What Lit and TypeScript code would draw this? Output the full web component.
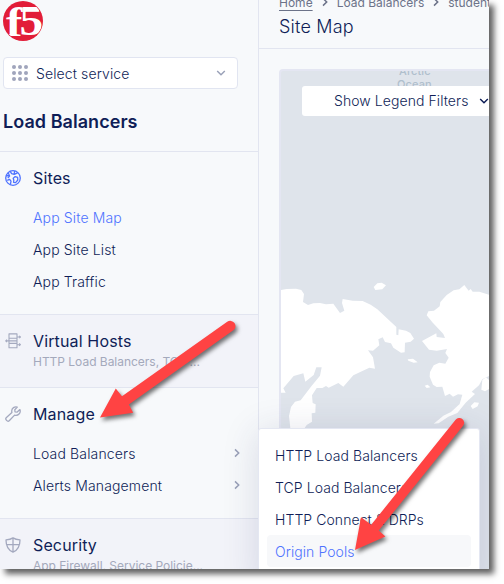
import { LitElement, html, svg, css } from "lit";
import { customElement, property } from "lit/decorators.js";

const icons: Record<string, unknown> = {
  globe: svg`<circle cx="8" cy="8" r="7.3"/><path d="M3.2 2.8 4.6 6 2.8 8.2M4.6 6 1.2 5.5M5.2 1.3 6.6 3.6 9.2 4.4 9.6 1M9.2 4.4 12.6 2.8M2.2 10.4 4.6 9.4 6 11.2 5.4 14.6M8.2 8.2 10.2 6.6 12.6 7.4 12.8 10 10.6 12.6 8.6 12.4 8.8 10.2Z"/>`,
  hosts: svg`<g stroke-width="1.1"><path d="M4 .9h8v4.4H4zM4 10.4h8v4.4H4zM4 5.3v5.1M12 5.3v5.1M.8 7.9H12M12 4h3M12 11.7h3"/><path d="M14.2 2.8 15.4 4 14.2 5.2M14.2 10.5 15.4 11.7 14.2 12.9M2 6.7.8 7.9 2 9.1"/></g>`,
  wrench: svg`<path d="M14.9 3.6 12.2 6.1 10 5.8 9.8 3.7 12.3 1.1C9.7.3 6.6 2 6.7 5.2L6.9 6.4 1.2 11.7C-.2 13.2 2.5 16.2 4.2 14.8L9.6 9.1C13.1 10.1 16.2 7 14.9 3.6Z"/>`,
  shield: svg`<path d="M8 .9C6 2.3 3.5 2.8 1 2.9 1 8.5 2.6 12.8 8 15.1 13.4 12.8 15 8.5 15 2.9 12.5 2.8 10 2.3 8 .9ZM8 1v14M1.3 7.7h13.4"/>`,
};

const right = html`<svg class="chev" width="6" height="10" viewBox="0 0 6 10"><path d="M1 1.4 4.7 5 1 8.6"/></svg>`;
const down = html`<svg class="chev" width="10" height="6" viewBox="0 0 10 6"><path d="M1.2 1 5 4.7 8.8 1"/></svg>`;

const base = css`
  * { box-sizing: border-box; }
  .chev { fill: none; stroke: currentColor; stroke-width: 1.5; display: block; flex: none; }
`;

@customElement("nav-section")
class NavSection extends LitElement {
  @property() icon = "";
  @property() heading = "";
  @property() note = "";
  @property({ type: Array }) items: string[] = [];
  @property() active = "";
  @property({ type: Boolean }) more = false;

  static styles = [base, css`
    :host { display: block; flex: none; box-sizing: border-box; border-top: 1px solid #e2e5f0; color: #0f1e57; }
    :host([note]) { background: #f2f3f9; }
    .head { display: flex; align-items: center; gap: 12px; padding: 15px 0 0 5px; height: 37px; }
    .icon { fill: none; stroke: #a4a9bf; stroke-width: 1.3; stroke-linejoin: round; display: block; }
    .icon.on { stroke: #4f73ff; }
    .title { font-size: 16px; line-height: 22px; letter-spacing: .14px; }
    .note { padding: 1px 0 0 33px; font-size: 12px; line-height: 18px; letter-spacing: -.02px; color: #a4a9bc; white-space: nowrap; }
    .list { padding-top: 12px; }
    .item { height: 32px; display: flex; align-items: center; justify-content: space-between; padding: 0 18px 0 33px; font-size: 14px; font-weight: 300; letter-spacing: .14px; }
    .item.on { color: #4f73ff; }
    .chev { color: #9aa1b8; }
  `];

  render() {
    return html`
      <div class="head">
        <svg class="icon ${this.icon === "globe" ? "on" : ""}" width="16" height="16" viewBox="0 0 16 16">${icons[this.icon]}</svg>
        <span class="title">${this.heading}</span>
      </div>
      ${this.note ? html`<div class="note">${this.note}</div>` : ""}
      ${this.items.length
        ? html`<div class="list">${this.items.map((t) => html`<div class="item ${t === this.active ? "on" : ""}"><span>${t}</span>${this.more ? right : ""}</div>`)}</div>`
        : ""}`;
  }
}

@customElement("site-map")
class SiteMap extends LitElement {
  static styles = [base, css`
    :host { display: block; position: relative; height: 520px; border: 2px solid #e4e6f2; border-right: 0; border-radius: 4px 0 0 0; background: #dfe4eb; overflow: hidden; }
    .land { position: absolute; left: 0; top: 0; fill: #fff; }
    .sea { font: 500 11px/12px Inter, sans-serif; fill: #b0bfcd; letter-spacing: .1px; }
    .legend { position: absolute; left: 21px; top: 15px; width: 230px; height: 30px; border-radius: 3px; background: #fff; display: flex; align-items: center; gap: 11px; padding: 0 0 1px 32px; font-size: 14px; font-weight: 300; letter-spacing: .07px; color: #0f1e57; white-space: nowrap; }
  `];

  render() {
    return html`
      <svg class="land" width="208" height="498" viewBox="281 71 208 498">
        <text class="sea" x="399" y="75.4">Arctic</text>
        <text class="sea" x="397" y="88">Ocean</text>
        <g transform="translate(270 270) scale(.33333)">
          <path d="M33 60 50 57 78 56 94 60 102 72 99 96 114 105 130 100 150 99 168 103 190 101 210 129 223 122 216 99 218 87 248 92 278 93 302 104 322 118 379 171 379 194 385 196 386 178 408 182 421 189 432 206 422 215 405 218 404 247 393 248 370 233 363 220 345 216 338 202 325 208 328 226 309 242 294 241 309 262 315 296 298 293 250 316 220 350 205 339 176 353 168 348 157 354 140 354 126 376 128 399 137 403 136 428 125 430 126 455 110 465 104 474 61 474 57 438 63 411 75 395 92 391 124 349 150 317 155 292 139 292 131 315 106 335 100 310 71 318 40 355 47 368 33 368Z"/>
          <path d="M311 51 322 40 335 38 348 46 337 58 316 60ZM413 268 429 266 443 277 431 278 415 272ZM464 347 473 344 481 352 470 354ZM602 408 613 397 627 398 623 409 608 417Z"/>
          <path d="M657 74 628 65 608 65 602 57 596 62 583 45 568 58 551 61 530 75 511 96 509 109 492 122 475 124 470 136 487 157 520 192 525 204 500 201 499 190 456 213 477 239 500 242 531 237 526 249 536 263 526 281 508 278 491 286 480 306 479 320 489 344 500 351 517 350 525 378 539 371 549 380 564 373 577 374 569 402 543 426 520 437 491 461 506 460 535 440 562 429 587 398 615 372 605 365 627 346 637 328 657 318Z"/>
          <path d="M648 322 637 330 634 359 645 364 657 357V330Z"/>
        </g>
      </svg>
      <div class="legend"><span>Show Legend Filters</span>${down}</div>`;
  }
}

@customElement("app-root")
class AppRoot extends LitElement {
  static styles = [base, css`
    :host { display: block; width: 504px; height: 584px; background: #fff; overflow: hidden; position: relative; font-family: Inter, sans-serif; }
    .shade { width: 489px; height: 569px; box-shadow: 5px 5px 6px rgba(0, 0, 0, .62); }
    .frame { width: 489px; height: 569px; background: #f7f9fb; display: flex; overflow: hidden; position: relative; }
    .side { width: 259px; flex: none; border-right: 1px solid #e2e5f0; display: flex; flex-direction: column; }
    .logo { display: block; margin: 1px 0 0 3px; flex: none; }
    .mark { font: 700 44px "Liberation Serif", serif; fill: #fff; }
    .select { margin: 16px 20px 0 3px; height: 32px; border: 1px solid #e1e5f1; border-radius: 4px; background: #fff; display: flex; align-items: center; padding: 0 11px 0 8px; gap: 8px; flex: none; color: #0f1e57; font-size: 14px; font-weight: 300; letter-spacing: .12px; }
    .grow { flex: 1; }
    .muted { color: #9aa1b8; }
    .dots { fill: #a0a5bc; display: block; }
    .name { height: 62px; flex: none; padding: 22px 0 0 3px; font-size: 18px; line-height: 22px; font-weight: 600; letter-spacing: .05px; color: #0f1e57; }
    .main { flex: 1; min-width: 0; }
    .top { height: 49px; border-bottom: 1px solid #e2e5f0; padding-left: 20px; overflow: hidden; }
    .crumbs { display: flex; align-items: center; height: 16px; margin-top: -6px; font-size: 12px; color: #6c7389; white-space: nowrap; gap: 9px; }
    .crumbs u { text-underline-offset: 3px; }
    .page { margin-top: 5px; font-size: 18px; line-height: 24px; font-weight: 300; letter-spacing: .2px; color: #0f1e57; }
    .map { padding: 20px 0 0 20px; }
    .menu { position: absolute; left: 258px; top: 428px; width: 222px; height: 160px; background: #fff; border: 1px solid #e4e7f2; border-radius: 3px; padding: 10px 8px; box-shadow: 0 4px 36px rgba(40, 50, 100, .15); }
    .opt { height: 32px; display: flex; align-items: center; padding: 0 0 0 8px; font-size: 14px; font-weight: 300; letter-spacing: .07px; color: #0f1e57; border-radius: 4px; white-space: nowrap; }
    .opt.on { background: #f7f8fa; color: #4f73ff; }
    .arrows { position: absolute; left: 0; top: 0; fill: #ff4343; filter: drop-shadow(2px 3px 2px rgba(0, 0, 0, .55)); }
  `];

  render() {
    const opts = ["HTTP Load Balancers", "TCP Load Balancers", "HTTP Connect & DRPs", "Origin Pools"];
    return html`
      <div class="shade"><div class="frame">
        <div class="side">
          <svg class="logo" width="40" height="40" viewBox="0 0 40 40">
            <defs><clipPath id="disc"><circle cx="20" cy="20" r="19.4"/></clipPath></defs>
            <circle cx="20" cy="20" r="20" fill="#e21d38"/>
            <g clip-path="url(#disc)">
              <text class="mark" transform="translate(3 34.8) scale(1.12 .98)">f</text>
              <text class="mark" transform="translate(16.6 34.3) scale(1.08 .96)">5</text>
            </g>
          </svg>
          <div class="select">
            <svg class="dots" width="16" height="16" viewBox="0 0 16 16">
              ${[2, 8, 14].map((y) => [2, 8, 14].map((x) => svg`<circle cx=${x} cy=${y} r="2"/>`))}
            </svg>
            <span class="grow">Select service</span><span class="muted">${down}</span>
          </div>
          <div class="name">Load Balancers</div>
          <nav-section style="height:163px" icon="globe" heading="Sites" active="App Site Map" .items=${["App Site Map", "App Site List", "App Traffic"]}></nav-section>
          <nav-section style="height:73px" icon="hosts" heading="Virtual Hosts" note="HTTP Load Balancers, TCP ..."></nav-section>
          <nav-section style="height:131px" icon="wrench" heading="Manage" more .items=${["Load Balancers", "Alerts Management"]}></nav-section>
          <nav-section style="height:73px" icon="shield" heading="Security" note="App Firewall, Service Policie..."></nav-section>
        </div>
        <div class="main">
          <div class="top">
            <div class="crumbs"><u>Home</u>${right}<span>Load Balancers</span>${right}<span>student</span></div>
            <div class="page">Site Map</div>
          </div>
          <div class="map"><site-map></site-map></div>
        </div>
        <div class="menu">${opts.map((t, i) => html`<div class="opt ${i === 3 ? "on" : ""}">${t}</div>`)}</div>
      </div></div>
      <svg class="arrows" width="504" height="584" viewBox="0 0 504 584">
        <path d="M100 417.6 115.8 388.5 122 396.2 227.2 321.8A5.2 5.2 0 0 1 233.3 330.3L128.8 404.5 133.2 412.8Z"/>
        <path d="M355 550 361 517.2 371.2 524.7 455.6 419.8A4.8 4.8 0 0 1 463.1 425.8L378.7 530.6 385.4 536.6Z"/>
      </svg>`;
  }
}
